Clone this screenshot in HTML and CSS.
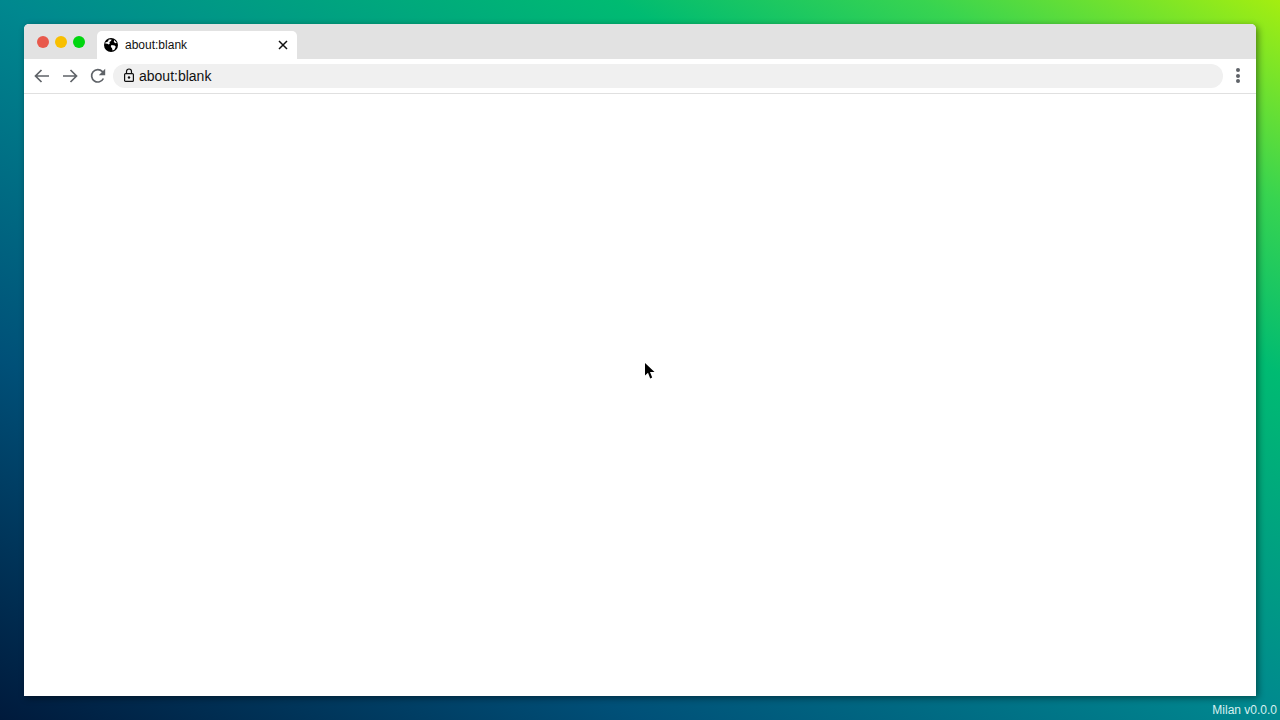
FILE: index.html
```html
<!DOCTYPE html>
<html lang="en">
<head>
<meta charset="utf-8">
<title>about:blank</title>
<link rel="stylesheet" href="styles.css">
</head>
<body>
<main class="desktop">
  <section class="window">
    <header class="tabstrip">
      <div class="lights">
        <span class="light red"></span>
        <span class="light yellow"></span>
        <span class="light green"></span>
      </div>
      <div class="tab">
        <svg class="globe" width="14" height="14" viewBox="0 0 14 14"><circle cx="7" cy="7" r="7" fill="#000"/><path d="M1 4.800 4 3.400 4.800 1.400 7.600 1.400 7 3 5.400 4 5.800 5.400 4.800 6.400 3.400 5.800 1.400 5.600zM7.400 7l3.200.4 1.200 1.400-1.400 3-1.800.8-.6-2.400-1.200-1.400zM10.200 2 12.800 4.800 11.200 5.200 9.800 3.800z" fill="#fff"/></svg>
        <span class="tab-title">about:blank</span>
        <svg class="close" width="10" height="10" viewBox="0 0 10 10"><path d="M1 1l8 8M9 1 1 9" stroke="#111" stroke-width="1.500" fill="none"/></svg>
      </div>
    </header>
    <nav class="toolbar">
      <svg class="nav-icon" width="16" height="14" viewBox="0 0 16 14"><path d="M15 7H2M7.500 1 1.500 7l6 6" stroke="#5f6368" stroke-width="1.700" fill="none"/></svg>
      <svg class="nav-icon" width="16" height="14" viewBox="0 0 16 14"><path d="M1 7h13M8.500 1l6 6-6 6" stroke="#5f6368" stroke-width="1.700" fill="none"/></svg>
      <svg class="nav-icon" width="16" height="16" viewBox="0 0 16 16"><path d="M13.400 10.500A6.200 6.200 0 1 1 12.400 3.600L14 5.500" stroke="#5f6368" stroke-width="1.700" fill="none"/><path d="M15.200 .8v6.400H8.800z" fill="#5f6368"/></svg>
      <div class="omnibox">
        <svg class="lock" width="10" height="14" viewBox="0 0 10 14"><path d="M2.500 5.500V3.500a2.500 2.500 0 0 1 5 0v2" stroke="#111" stroke-width="1.200" fill="none"/><rect x=".6" y="5.600" width="8.800" height="7.800" rx="1" stroke="#111" stroke-width="1.200" fill="none"/><circle cx="5" cy="9.500" r="1.200" fill="#111"/></svg>
        <span class="url">about:blank</span>
      </div>
      <div class="menu"><i></i><i></i><i></i></div>
    </nav>
    <div class="content"></div>
  </section>
  <svg class="cursor" width="10" height="16" viewBox="0 0 10 16"><path d="M0 0v12.500l3-2.800L5.200 15.500l2-1L5 9h4.500z" fill="#000"/></svg>
  <div class="version">Milan v0.0.0</div>
</main>
</body>
</html>
```
FILE: styles.css
```css
* { box-sizing: border-box; }
html, body { margin: 0; height: 100%; }
body { font-family: "Liberation Sans", Arial, sans-serif; overflow: hidden; }
.desktop {
  position: relative;
  width: 1280px;
  height: 720px;
  padding: 24px;
  background: linear-gradient(to top right, #001a3c 0%, #005078 25%, #00888f 50%, #00bb72 74%, #38d450 86%, #a4ee10 100%);
}
.window {
  width: 1232px;
  height: 672px;
  display: flex;
  flex-direction: column;
  background: #fff;
  border-radius: 5px 5px 0 0;
  overflow: hidden;
  box-shadow: 2px 2px 7px rgba(0, 0, 0, .45);
}
.tabstrip {
  height: 35px;
  flex: none;
  display: flex;
  align-items: flex-end;
  background: #e2e2e2;
}
.lights { display: flex; gap: 6px; padding: 0 12px 11px 13px; }
.light { width: 12px; height: 12px; border-radius: 50%; }
.red { background: #e8594c; }
.yellow { background: #f8bf00; }
.green { background: #00d60f; }
.tab {
  width: 200px;
  height: 28px;
  display: flex;
  align-items: center;
  padding: 0 9px 0 7px;
  background: #fff;
  border-radius: 5px 5px 0 0;
  font-size: 12px;
  color: #111;
}
.tab-title { flex: 1; margin-left: 7px; }
.toolbar {
  height: 35px;
  flex: none;
  display: flex;
  align-items: center;
  padding: 0 14px 1px 10px;
  background: #fff;
  border-bottom: 1px solid #e0e0e0;
}
.nav-icon { margin-right: 12px; flex: none; }
.omnibox {
  width: 1110px;
  height: 24px;
  margin-left: -5px;
  display: flex;
  align-items: center;
  padding-left: 11px;
  background: #f0f0f0;
  border-radius: 12px;
  font-size: 14px;
  color: #111;
}
.lock { margin: -2px 5px 0 0; }
.menu {
  margin-left: 13px;
  display: flex;
  flex-direction: column;
  gap: 1.500px;
}
.menu i { width: 4px; height: 4px; border-radius: 50%; background: #5f6368; display: block; }
.content { flex: 1; background: #fff; }
.cursor { position: absolute; left: 645px; top: 363px; }
.version {
  position: absolute;
  right: 3px;
  bottom: 3px;
  font-size: 12px;
  color: #d8f0f0;
}
```
